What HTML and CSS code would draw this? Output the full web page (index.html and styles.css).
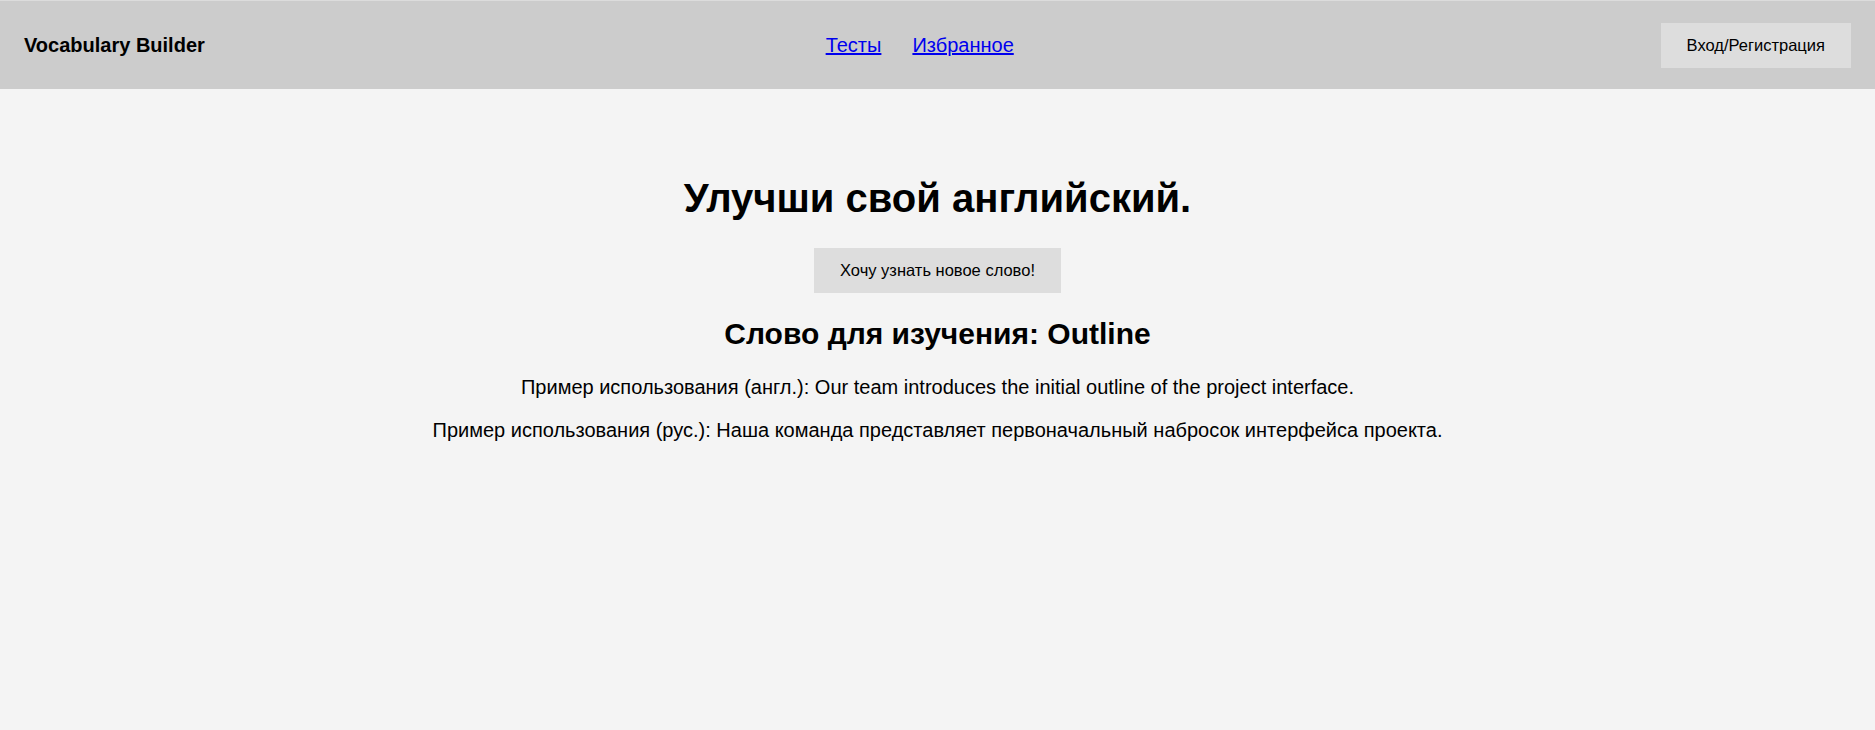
FILE: index.html
```html
<!DOCTYPE html>
<html lang="ru">
<head>
<meta charset="utf-8">
<title>Vocabulary Builder</title>
<link rel="stylesheet" href="styles.css">
</head>
<body>
<header class="site-header">
  <div class="brand">Vocabulary Builder</div>
  <nav class="nav">
    <a href="#" class="nav-link">Тесты</a>
    <a href="#" class="nav-link">Избранное</a>
  </nav>
  <button class="btn">Вход/Регистрация</button>
</header>
<main class="hero">
  <h1 class="hero-title">Улучши свой английский.</h1>
  <button class="btn hero-btn">Хочу узнать новое слово!</button>
  <h2 class="word-title">Слово для изучения: Outline</h2>
  <p class="example first">Пример использования (англ.): Our team introduces the initial outline of the project interface.</p>
  <p class="example second">Пример использования (рус.): Наша команда представляет первоначальный набросок интерфейса проекта.</p>
</main>
</body>
</html>
```

FILE: styles.css
```css
* { box-sizing: border-box; }

html, body {
  margin: 0;
  padding: 0;
}

body {
  background: #f4f4f4;
  font-family: "Liberation Sans", Arial, sans-serif;
  color: #000;
}

.site-header {
  display: flex;
  align-items: center;
  justify-content: space-between;
  height: 89px;
  padding: 0 24px;
  background: #cccccc;
  border-top: 1px solid #dcdcdc;
}

.brand {
  font-size: 20px;
  font-weight: bold;
}

.nav {
  display: flex;
  gap: 31px;
  padding-right: 26px;
}

.nav-link {
  font-size: 20px;
  color: #0000ee;
  text-decoration: underline;
}

.btn {
  font-family: "Liberation Sans", Arial, sans-serif;
  font-size: 16.5px;
  line-height: 19px;
  padding: 13px 26px;
  background: #dddddd;
  border: none;
  color: #000;
  cursor: pointer;
}

.hero {
  display: flex;
  flex-direction: column;
  align-items: center;
  text-align: center;
  padding-top: 87px;
}

.hero-title {
  margin: 0;
  font-size: 40px;
  font-weight: bold;
}

.hero-btn {
  margin-top: 27px;
}

.word-title {
  margin: 24px 0 0;
  font-size: 30px;
  font-weight: bold;
}

.example {
  margin: 0;
  font-size: 20px;
}

.example.first {
  margin-top: 25px;
}

.example.second {
  margin-top: 20px;
}
```
